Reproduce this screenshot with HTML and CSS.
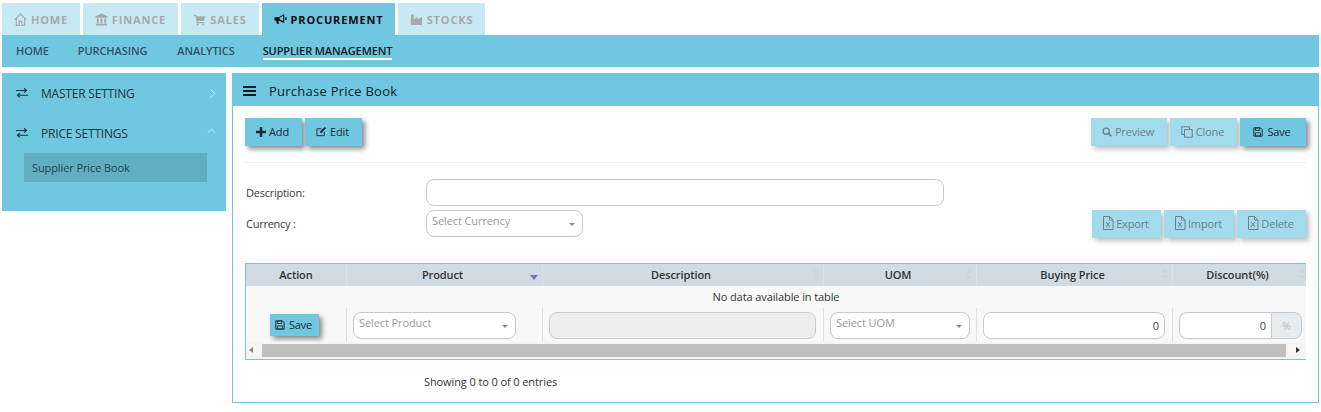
FILE: index.html
```html
<!DOCTYPE html>
<html lang="en">
<head>
<meta charset="utf-8">
<title>Purchase Price Book</title>
<link rel="stylesheet" href="styles.css">
</head>
<body>
<svg class="defs" width="0" height="0" aria-hidden="true">
  <defs>
    <symbol id="i-xls" viewBox="0 0 12 14"><path d="M1.500.5h6l3.500 3.500v9.500h-9.500z M7.500.5v3.500H11" fill="none" stroke="currentColor"/><path d="M4 6l4 5M8 6l-4 5" fill="none" stroke="currentColor"/></symbol>
    <symbol id="i-save" viewBox="0 0 12 12"><path d="M1 1h8l2 2v8H1z" fill="none" stroke="currentColor" stroke-width="1.200"/><path d="M3 1.200h5v3H3zM3 7h6v3.600H3z" fill="none" stroke="currentColor"/></symbol>
    <symbol id="i-swap" viewBox="0 0 12 10"><path d="M0 3h10M8 .8L10.600 3 8 5.200" fill="none" stroke="currentColor" stroke-width="1.100" transform="translate(0 -.5)"/><path d="M12 7H2M4 4.800L1.400 7 4 9.200" fill="none" stroke="currentColor" stroke-width="1.100" transform="translate(0 .3)"/></symbol>
  </defs>
</svg>
<nav class="tabs">
  <a class="tab tab-home"><svg class="ti" viewBox="0 0 14 14"><path d="M.8 7.200L7 1.200l6.200 6M2.500 6v7.300h3.200V9h2.600v4.300h3.200V6" fill="none" stroke="currentColor" stroke-width="1.200"/></svg>HOME</a>
  <a class="tab tab-finance"><svg class="ti" viewBox="0 0 14 14"><path d="M7 .5l6.500 3v1.500H.5V3.500zM2 6h2v5H2zM6 6h2v5H6zM10 6h2v5h-2zM1 11.500h12v2H1z" fill="currentColor"/></svg>FINANCE</a>
  <a class="tab tab-sales"><svg class="ti" viewBox="0 0 14 14"><path d="M1 2h2.500l.4 1.500H13l-1.200 5H5l.3 1.200h6.700V11H4.200L2.600 3.300H1z" fill="currentColor"/><circle cx="5" cy="12.300" r="1.100" fill="currentColor"/><circle cx="11" cy="12.300" r="1.100" fill="currentColor"/></svg>SALES</a>
  <a class="tab tab-active tab-proc"><svg class="ti" viewBox="0 0 14 14"><path d="M.5 4.500h4.500l6-3.500v10L5 8H4.500l1 3.500H3.200L2 8H.5z" fill="currentColor"/><path d="M9.800 3L6 5v1.600l3.800 2z" fill="#70c8e0"/><path d="M12 4.500h1.500v3H12z" fill="currentColor"/></svg>PROCUREMENT</a>
  <a class="tab tab-stocks"><svg class="ti" viewBox="0 0 14 14"><path d="M1 1.500h3V7l4-3v3l5-3v9H1z" fill="currentColor"/></svg>STOCKS</a>
</nav>
<nav class="subnav">
  <a class="sublink">HOME</a>
  <a class="sublink">PURCHASING</a>
  <a class="sublink sl-analytics">ANALYTICS</a>
  <a class="sublink sublink-active">SUPPLIER MANAGEMENT</a>
</nav>
<div class="layout">
  <aside class="sidebar">
    <div class="side-item"><svg class="swap"><use href="#i-swap"/></svg><span class="side-label">MASTER SETTING</span><svg class="chev" viewBox="0 0 8 12"><path d="M1.500 1l5 5-5 5" fill="none" stroke="currentColor"/></svg></div>
    <div class="side-item side-item-open"><svg class="swap"><use href="#i-swap"/></svg><span class="side-label">PRICE SETTINGS</span><svg class="chev chev-up" viewBox="0 0 12 8"><path d="M1 6.500l5-5 5 5" fill="none" stroke="currentColor" stroke-width="1.300"/></svg></div>
    <div class="side-sub">Supplier Price Book</div>
  </aside>
  <main class="panel">
    <header class="panel-head">
      <span class="burger"><i></i><i></i><i></i></span>
      <h1>Purchase Price Book</h1>
    </header>
    <div class="panel-body">
      <div class="toolbar">
        <div class="btn-group">
          <button class="btn btn-add"><svg class="bi" viewBox="0 0 10 10"><path d="M3.800 0h2.400v3.800H10v2.400H6.200V10H3.800V6.200H0V3.800h3.800z" fill="currentColor"/></svg>Add</button>
          <button class="btn btn-edit"><svg class="bi bi-edit" viewBox="0 0 12 12"><path d="M9 6.500V10.500H1V3h5" fill="none" stroke="currentColor"/><path d="M4.500 6l5-5 1.500 1.500-5 5H4.500z" fill="currentColor"/></svg>Edit</button>
        </div>
        <div class="btn-group">
          <button class="btn btn-off btn-preview"><svg class="bi" viewBox="0 0 12 12"><circle cx="5" cy="5" r="3.700" fill="none" stroke="currentColor" stroke-width="1.600"/><path d="M8 8l3 3" stroke="currentColor" stroke-width="2"/></svg>Preview</button>
          <button class="btn btn-off btn-clone"><svg class="bi bi-clone" viewBox="0 0 12 12"><path d="M3.500 8.500H.8V.8h7.700v2.700" fill="none" stroke="currentColor"/><path d="M3.500 3.500h7.700v7.700H3.500z" fill="none" stroke="currentColor"/></svg>Clone</button>
          <button class="btn btn-save"><svg class="bi bi-savei"><use href="#i-save"/></svg>Save</button>
        </div>
      </div>
      <hr class="rule">
      <div class="form-row form-desc">
        <label class="form-label">Description:</label>
        <input class="field field-desc" type="text" aria-label="Description">
      </div>
      <div class="form-row form-curr">
        <label class="form-label">Currency :</label>
        <div class="select select-curr"><span>Select Currency</span><b class="caret"></b></div>
        <div class="btn-group btn-right">
          <button class="btn btn-off btn-export"><svg class="bi bi-x"><use href="#i-xls"/></svg>Export</button>
          <button class="btn btn-off btn-import"><svg class="bi bi-x"><use href="#i-xls"/></svg>Import</button>
          <button class="btn btn-off btn-delete"><svg class="bi bi-x"><use href="#i-xls"/></svg>Delete</button>
        </div>
      </div>
      <div class="grid-wrap">
        <table class="grid">
          <colgroup>
            <col class="c-action"><col class="c-product"><col class="c-desc"><col class="c-uom"><col class="c-price"><col class="c-disc">
          </colgroup>
          <thead>
            <tr>
              <th>Action</th>
              <th class="sort sort-active">Product</th>
              <th class="sort">Description</th>
              <th class="sort">UOM</th>
              <th class="sort">Buying Price</th>
              <th class="sort">Discount(%)</th>
            </tr>
          </thead>
          <tbody>
            <tr class="empty-row"><td colspan="6">No data available in table</td></tr>
            <tr class="entry-row">
              <td class="cell-action"><button class="btn btn-row"><svg class="bi bi-savei"><use href="#i-save"/></svg>Save</button></td>
              <td class="cell-product"><div class="select select-cell"><span>Select Product</span><b class="caret"></b></div></td>
              <td class="cell-wide"><input class="field field-cell field-disabled" type="text" disabled aria-label="Description"></td>
              <td><div class="select select-cell"><span>Select UOM</span><b class="caret"></b></div></td>
              <td class="cell-wide"><input class="field field-cell field-num" type="text" value="0" aria-label="Buying Price"></td>
              <td><div class="input-group"><input class="field field-cell field-num field-joined" type="text" value="0" aria-label="Discount"><span class="addon">%</span></div></td>
            </tr>
          </tbody>
        </table>
        <div class="scrollbar">
          <span class="sb-arrow sb-left"></span>
          <span class="sb-thumb"></span>
          <span class="sb-arrow sb-right"></span>
        </div>
      </div>
      <p class="info">Showing 0 to 0 of 0 entries</p>
    </div>
  </main>
</div>
</body>
</html>
```
FILE: styles.css
```css
* { box-sizing: border-box; }
html, body { margin: 0; padding: 0; }
body {
  background: #fff;
  width: 1321px;
  height: 412px;
  overflow: hidden;
  padding: 3px 2px 0;
  font-family: "Open Sans", "Liberation Sans", sans-serif;
  font-size: 11px;
  letter-spacing: -.1px;
  color: #333;
}
.defs { position: absolute; }

.tabs { display: flex; gap: 3px; height: 32px; }
.tab {
  display: flex; align-items: center; justify-content: center;
  background: #c7e9f2; color: #a8a8a8;
  font-weight: 700; font-size: 11px; letter-spacing: .85px;
}
.tab-home { width: 78px; }
.tab-finance { width: 95px; }
.tab-sales { width: 78px; }
.tab-proc { width: 133px; }
.tab-stocks { width: 87px; }
.tab-active { background: #70c8e0; color: #0c0c0c; }
.ti { width: 13px; height: 13px; margin-right: 4px; flex: none; }

.subnav {
  display: flex; align-items: center; gap: 29px;
  height: 32px; width: 1317px; padding-left: 14px;
  background: #70c8e0; margin-bottom: 6px;
}
.sublink { font-size: 11px; font-weight: 600; letter-spacing: -.1px; color: #35525e; border-bottom: 2px solid transparent; line-height: 15px; margin-top: 1px; }
.sl-analytics { margin-left: 1px; }
.sublink-active { color: #0b1a20; border-bottom-color: #fff; margin-left: -1px; }

.layout { display: flex; gap: 6px; align-items: flex-start; width: 1317px; }

.sidebar { width: 224px; height: 138px; background: #70c8e0; }
.side-item { display: flex; align-items: center; height: 40px; padding: 0 10px 0 14px; font-size: 12px; letter-spacing: -.2px; color: #21323a; }
.swap { width: 12px; height: 10px; flex: none; margin-right: 13px; color: #21323a; }
.side-label { flex: 1; }
.chev { width: 7px; height: 11px; color: #d2eff7; }
.chev-up { width: 9px; height: 6px; margin-bottom: 4px; }
.side-sub {
  margin: 0 19px 0 22px; height: 29px; padding-left: 8px;
  display: flex; align-items: center;
  background: #61adc2; color: #28434e; font-size: 11px; letter-spacing: -.1px;
}

.panel { width: 1087px; height: 330px; border: 1px solid #70c8e0; border-top: 0; }
.panel-head {
  display: flex; align-items: center; height: 33px; margin: 0 -1px;
  background: #70c8e0; padding: 3px 0 0 11px; color: #10202a;
}
.panel-head h1 { margin: 0 0 0 13px; font-size: 13px; font-weight: 400; letter-spacing: .25px; }
.burger { display: flex; flex-direction: column; gap: 2px; width: 13px; }
.burger i { display: block; height: 2px; background: #0f1a20; }

.panel-body { padding: 12px 12px 0; }
.toolbar { display: flex; justify-content: space-between; }
.btn-group { display: flex; gap: 3px; }
.btn {
  display: flex; align-items: center; justify-content: center;
  height: 28px; padding: 0 2px 1px 0; border: 0;
  background: #70c8e0; color: #1d2a30;
  font: 400 11px "Open Sans", "Liberation Sans", sans-serif;
  letter-spacing: -.15px;
  box-shadow: 3px 3px 5px #8a8a8a;
}
.btn-off { background: #a2dcec; color: #6e7f86; box-shadow: 3px 3px 5px #bdbdbd; }
.btn-add { width: 57px; }
.btn-edit { width: 57px; }
.btn-preview { width: 76px; }
.btn-clone { width: 67px; }
.btn-save { width: 66px; }
.btn-export { width: 69px; }
.btn-import { width: 70px; }
.btn-delete { width: 69px; }
.bi { width: 10px; height: 10px; margin-right: 3px; flex: none; }
.bi-edit { width: 11px; height: 11px; }
.bi-clone { width: 12px; height: 12px; }
.bi-savei { width: 10px; height: 10px; margin-right: 4px; }
.bi-x { width: 12px; height: 14px; margin-right: 2px; }

.rule { margin: 16px 0 0; border: 0; border-top: 1px solid #eee; }

.form-row { display: flex; align-items: center; }
.form-desc { margin-top: 16px; height: 27px; }
.form-curr { margin-top: 4px; height: 27px; }
.form-label { width: 181px; padding-left: 1px; flex: none; color: #3b3b3b; font-size: 11px; letter-spacing: -.25px; }
.btn-right { margin-left: auto; }

.field {
  height: 27px; border: 1px solid #c5c9d3; border-radius: 8px;
  background: #fff; font: 400 11px "Open Sans", "Liberation Sans", sans-serif; color: #555;
  padding: 0 8px; outline: 0;
}
.field-desc { width: 518px; }
.select {
  position: relative; display: flex; align-items: flex-start;
  height: 27px; border: 1px solid #c5c9d3; border-radius: 8px; background: #fff;
  padding: 2px 5px 0; color: #9a9a9a; font-size: 11px;
}
.select-curr { width: 157px; }
.caret {
  position: absolute; right: 7px; top: 12px;
  border: 3px solid transparent; border-top: 3px solid #8a8a8a; border-bottom: 0;
}

.grid-wrap {
  margin-top: 26px; width: 1061px;
  border-top: 1px solid #70c8e0; border-bottom: 1px solid #70c8e0; border-left: 1px solid #70c8e0;
  background: #f8f8f8;
}
.grid { width: 1060px; border-collapse: separate; border-spacing: 0; table-layout: fixed; }
.c-action { width: 100px; }
.c-product { width: 196px; }
.c-desc { width: 281px; }
.c-uom { width: 153px; }
.c-price { width: 196px; }
.c-disc { width: 134px; }
.grid th {
  position: relative; height: 22px; padding: 0 0 2px;
  background: #d0dbe4; color: #333; font-size: 11px; font-weight: 600;
  border-left: 1px solid #dbe3ea;
}
.grid th:first-child { border-left: 0; }
.grid th.sort { padding-right: 4px; }
.sort::before, .sort::after {
  content: ""; position: absolute; right: 4px;
  border: 3px solid transparent;
}
.sort::before { top: 5px; border-bottom: 4px solid #c9d5df; border-top: 0; }
.sort::after { top: 11px; border-top: 4px solid #c9d5df; border-bottom: 0; }
.sort:last-child::before, .sort:last-child::after { right: 1px; }
.sort-active::before { display: none; }
.sort-active::after { border-top: 5px solid #7474d0; border-left-width: 4px; border-right-width: 4px; right: 4px; }
.empty-row td { height: 22px; padding: 0 0 2px; text-align: center; color: #333; font-size: 11px; }
.entry-row td { height: 34px; padding: 4px 6px 0; border-left: 1px solid #dfdfdf; vertical-align: top; }
.entry-row td:first-child { border-left: 0; padding: 6px 0 0; }
.entry-row td.cell-product { padding-right: 26px; }
.entry-row td.cell-wide { padding-right: 7px; }
.cell-action .btn { margin-left: 24px; }
.btn-row { width: 49px; height: 22px; box-shadow: 3px 3px 5px #888; }
.field-cell { display: block; width: 100%; height: 27px; }
.select-cell { width: auto; }
.field-disabled { background: #ededed; }
.field-num { text-align: right; padding-right: 5px; color: #444; }
.input-group { display: flex; margin-right: -2px; }
.field-joined { flex: 1; min-width: 0; border-radius: 8px 0 0 8px; border-right: 0; }
.addon {
  width: 31px; height: 27px; display: flex; align-items: center; justify-content: center;
  background: #e9ecef; border: 1px solid #c5c9d3; border-radius: 0 8px 8px 0; color: #b4b8c4;
}

.scrollbar {
  display: flex; align-items: center;
  height: 17px; background: #f5f5f5; padding: 2px 0;
}
.sb-arrow { width: 16px; height: 13px; flex: none; position: relative; }
.sb-arrow::after { content: ""; position: absolute; top: 3px; border: 3px solid transparent; }
.sb-left::after { left: 3px; border-right: 4px solid #888; border-left: 0; }
.sb-right::after { right: 6px; border-left: 4px solid #333; border-right: 0; }
.sb-right { width: 20px; }
.sb-thumb { flex: 1; height: 13px; background: #bebebe; }

.info { margin: 14px 0 0 179px; color: #333; font-size: 11px; }
```
